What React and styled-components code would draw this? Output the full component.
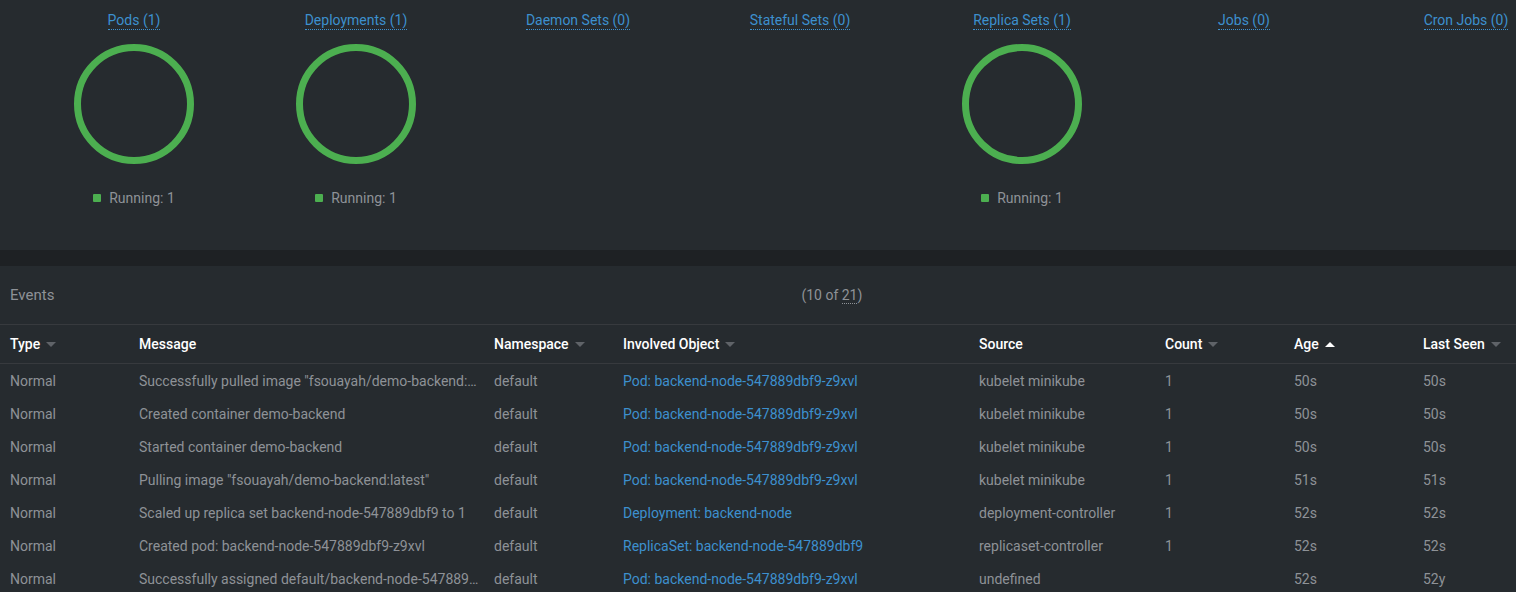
import * as React from "react";
import styled, { createGlobalStyle } from "styled-components";

const GlobalStyle = createGlobalStyle`
  html, body {
    margin: 0;
    padding: 0;
    background: #1e2124;
    font-family: Roboto, "Liberation Sans", sans-serif;
    font-size: 14px;
    color: #8e9297;
    overflow: hidden;
  }
`;

const stats = [
  { title: "Pods (1)", running: 1 },
  { title: "Deployments (1)", running: 1 },
  { title: "Daemon Sets (0)" },
  { title: "Stateful Sets (0)" },
  { title: "Replica Sets (1)", running: 1 },
  { title: "Jobs (0)" },
  { title: "Cron Jobs (0)" },
];

const POD = "Pod: backend-node-547889dbf9-z9xvl";

const events = [
  ["Normal", 'Successfully pulled image "fsouayah/demo-backend:latest" in 2.1s', "default", POD, "kubelet minikube", "1", "50s", "50s"],
  ["Normal", "Created container demo-backend", "default", POD, "kubelet minikube", "1", "50s", "50s"],
  ["Normal", "Started container demo-backend", "default", POD, "kubelet minikube", "1", "50s", "50s"],
  ["Normal", 'Pulling image "fsouayah/demo-backend:latest"', "default", POD, "kubelet minikube", "1", "51s", "51s"],
  ["Normal", "Scaled up replica set backend-node-547889dbf9 to 1", "default", "Deployment: backend-node", "deployment-controller", "1", "52s", "52s"],
  ["Normal", "Created pod: backend-node-547889dbf9-z9xvl", "default", "ReplicaSet: backend-node-547889dbf9", "replicaset-controller", "1", "52s", "52s"],
  ["Normal", "Successfully assigned default/backend-node-547889dbf9-z9xvl to minikube", "default", POD, "undefined", "", "52s", "52y"],
];

const columns = [
  { name: "Type", sort: "down" },
  { name: "Message" },
  { name: "Namespace", sort: "down" },
  { name: "Involved Object", sort: "down" },
  { name: "Source" },
  { name: "Count", sort: "down" },
  { name: "Age", sort: "up" },
  { name: "Last Seen", sort: "down" },
];

const Page = styled.div`
  width: 1516px;
  height: 592px;
  display: flex;
  flex-direction: column;
  gap: 16px;
  overflow: hidden;
`;

const Overview = styled.section`
  height: 250px;
  flex: none;
  background: #262b2f;
  display: grid;
  grid-template-columns: repeat(7, 222px);
  padding-left: 23px;
  overflow: hidden;
`;

const Stat = styled.div`
  display: flex;
  flex-direction: column;
  align-items: center;
  padding-top: 12px;
`;

const StatTitle = styled.a`
  color: #3d90ce;
  line-height: 17px;
  border-bottom: 1px dotted #3d90ce;
  white-space: nowrap;
  cursor: pointer;
`;

const Chart = styled.svg`
  margin-top: 14px;
  display: block;
`;

const Legend = styled.div`
  margin-top: 25px;
  display: flex;
  align-items: center;
  gap: 8px;
  line-height: 18px;
  white-space: nowrap;
`;

const Dot = styled.span`
  width: 8px;
  height: 8px;
  border-radius: 1px;
  background: #4caf50;
`;

const Panel = styled.section`
  flex: 1;
  background: #262b2f;
  display: flex;
  flex-direction: column;
`;

const PanelHeader = styled.div`
  height: 58px;
  flex: none;
  display: flex;
  align-items: center;
  padding: 0 10px;
  border-bottom: 1px solid #373a3e;
`;

const PanelTitle = styled.h5`
  margin: 0;
  font-size: 15px;
  font-weight: 400;
  color: #8e9297;
`;

const Info = styled.div`
  margin-left: 747px;
  color: #8e9297;
`;

const Total = styled.span`
  border-bottom: 1px dotted #8e9297;
`;

const Row = styled.div`
  display: grid;
  grid-template-columns: 129px 355px 129px 356px 186px 129px 129px 1fr;
  padding-left: 10px;
  height: ${(p) => (p.$head ? "38px" : "33px")};
  flex: none;
  align-items: center;
  border-bottom: ${(p) => (p.$head ? "1px solid #373a3e" : "none")};
`;

const HeadCell = styled.div`
  display: flex;
  align-items: center;
  gap: 6px;
  color: #ffffff;
  font-weight: 500;
  white-space: nowrap;
`;

const Cell = styled.div`
  color: ${(p) => (p.$link ? "#3d90ce" : "#8e9297")};
  white-space: nowrap;
  overflow: hidden;
  text-overflow: ellipsis;
  padding-right: 14px;
`;

const Arrow = styled.span`
  width: 0;
  height: 0;
  border-left: 5px solid transparent;
  border-right: 5px solid transparent;
  ${(p) =>
    p.$up
      ? "border-bottom: 5px solid #ffffff;"
      : "border-top: 5px solid #5f6368;"}
`;

function Ring() {
  return (
    <Chart width="120" height="120" viewBox="0 0 120 120">
      <circle cx="60" cy="60" r="56.5" fill="none" stroke="#4caf50" strokeWidth="7" />
    </Chart>
  );
}

export default function App() {
  return (
    <>
      <GlobalStyle />
      <Page>
        <Overview>
          {stats.map((s) => (
            <Stat key={s.title}>
              <StatTitle>{s.title}</StatTitle>
              {s.running && (
                <>
                  <Ring />
                  <Legend>
                    <Dot />
                    Running: {s.running}
                  </Legend>
                </>
              )}
            </Stat>
          ))}
        </Overview>
        <Panel>
          <PanelHeader>
            <PanelTitle>Events</PanelTitle>
            <Info>
              (10 of <Total>21</Total>)
            </Info>
          </PanelHeader>
          <Row $head>
            {columns.map((c) => (
              <HeadCell key={c.name}>
                {c.name}
                {c.sort && <Arrow $up={c.sort === "up"} />}
              </HeadCell>
            ))}
          </Row>
          {events.map((e, i) => (
            <Row key={i}>
              {e.map((v, j) => (
                <Cell key={j} $link={j === 3}>
                  {v}
                </Cell>
              ))}
            </Row>
          ))}
        </Panel>
      </Page>
    </>
  );
}
